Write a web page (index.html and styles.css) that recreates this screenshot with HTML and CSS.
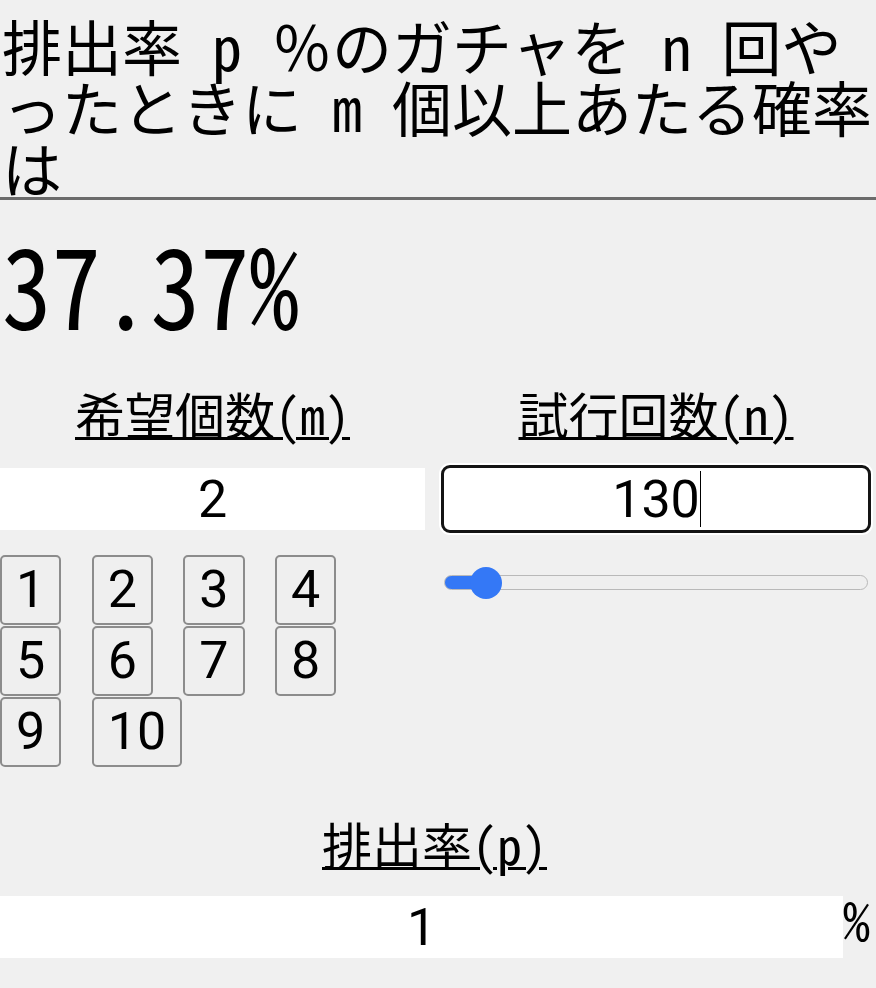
FILE: index.html
```html
<!DOCTYPE html>
<html lang="ja">
<head>
<meta charset="utf-8">
<title>ガチャ確率計算</title>
<link rel="stylesheet" href="styles.css">
</head>
<body>
<h1 class="title">排出率 p <span class="fullwidth">％</span>のガチャを n 回やったときに m 個以上あたる確率は</h1>
<div class="result"><span class="result-value">37.37%</span></div>
<div class="form">
  <div class="pair">
    <label class="label" for="m">希望個数(m)</label>
    <div class="label">試行回数(n)</div>
    <input id="m" class="field" type="text" value="2">
    <div class="field field-focused" role="textbox"><span>130</span><span class="caret"></span></div>
    <div class="keys">
      <button class="key">1</button>
      <button class="key">2</button>
      <button class="key">3</button>
      <button class="key">4</button>
      <button class="key">5</button>
      <button class="key">6</button>
      <button class="key">7</button>
      <button class="key">8</button>
      <button class="key">9</button>
      <button class="key">10</button>
    </div>
    <div class="slider-cell">
      <input class="slider" type="range" min="0" max="2000" value="130" style="--fill: 10%">
    </div>
  </div>
  <div class="rate">
    <label class="label" for="p">排出率(p)</label>
    <div class="rate-row">
      <input id="p" class="field" type="text" value="1">
      <span class="unit">%</span>
    </div>
  </div>
</div>
</body>
</html>
```

FILE: styles.css
```css
html, body {
  margin: 0;
  padding: 0;
  background: #f0f0f0;
}

body {
  font-family: "Noto Sans CJK JP", sans-serif;
  font-feature-settings: "hwid" 1;
  color: #000;
}

.title {
  margin: 0;
  padding: 14px 0 0 2px;
  font-size: 60px;
  line-height: 61px;
  font-weight: 400;
  border-bottom: 3px solid #6b6b6b;
}

.fullwidth {
  font-feature-settings: normal;
}

.result {
  margin-top: 25px;
  height: 112px;
  padding-left: 2px;
}

.result-value {
  display: inline-block;
  font-size: 112px;
  line-height: 112px;
  transform: scaleX(0.884);
  transform-origin: left center;
}

.form {
  padding-right: 7px;
  margin-top: 51px;
}

.pair {
  display: grid;
  grid-template-columns: 425px 424px;
  column-gap: 19px;
}

.label {
  display: block;
  font-size: 50px;
  line-height: 50px;
  height: 50px;
  text-align: center;
  text-decoration: underline;
  text-decoration-thickness: 3px;
  text-underline-offset: 2px;
}

.field {
  box-sizing: border-box;
  height: 62px;
  margin: 30px 0 0;
  padding: 0;
  border: none;
  border-radius: 0;
  background: #fff;
  font-family: Roboto, sans-serif;
  font-size: 52px;
  color: #000;
  text-align: center;
  outline: none;
  width: 100%;
}

.field-focused {
  display: flex;
  align-items: center;
  justify-content: center;
  border-radius: 6px;
  outline: 3px solid #141414;
  box-shadow: 0 0 0 5px #fff;
}

.caret {
  display: inline-block;
  width: 1px;
  height: 56px;
  margin-right: -1px;
  background: #000;
}

.keys {
  margin-top: 25px;
  display: grid;
  grid-template-columns: repeat(4, 91.67px);
  grid-auto-rows: 70px;
  row-gap: 1px;
  justify-items: start;
}

.key {
  box-sizing: border-box;
  height: 70px;
  margin: 0;
  padding: 0 14px;
  background: #efefef;
  border: 2px solid #8c8c8c;
  border-radius: 5px;
  font-family: Roboto, sans-serif;
  font-size: 52px;
  line-height: 1;
  color: #000;
}

.slider-cell {
  margin-top: 25px;
  padding-top: 11px;
}

.slider {
  -webkit-appearance: none;
  appearance: none;
  display: block;
  width: 100%;
  height: 32px;
  margin: 0;
  background: transparent;
}

.slider::-webkit-slider-runnable-track {
  height: 15px;
  border: 1px solid #b9b9b9;
  border-radius: 9px;
  background: linear-gradient(to right, #3478f6 var(--fill), #efefef var(--fill));
}

.slider::-webkit-slider-thumb {
  -webkit-appearance: none;
  appearance: none;
  width: 32px;
  height: 32px;
  margin-top: -8.5px;
  border: none;
  border-radius: 50%;
  background: #3478f6;
}

.rate {
  margin-top: 51px;
}

.rate-row {
  display: flex;
  align-items: flex-start;
  margin-top: 28px;
}

.rate-row .field {
  margin: 0;
  flex: 1;
}

.unit {
  width: 26px;
  margin-top: -5px;
  font-size: 54px;
  line-height: 54px;
  text-align: center;
}
```
